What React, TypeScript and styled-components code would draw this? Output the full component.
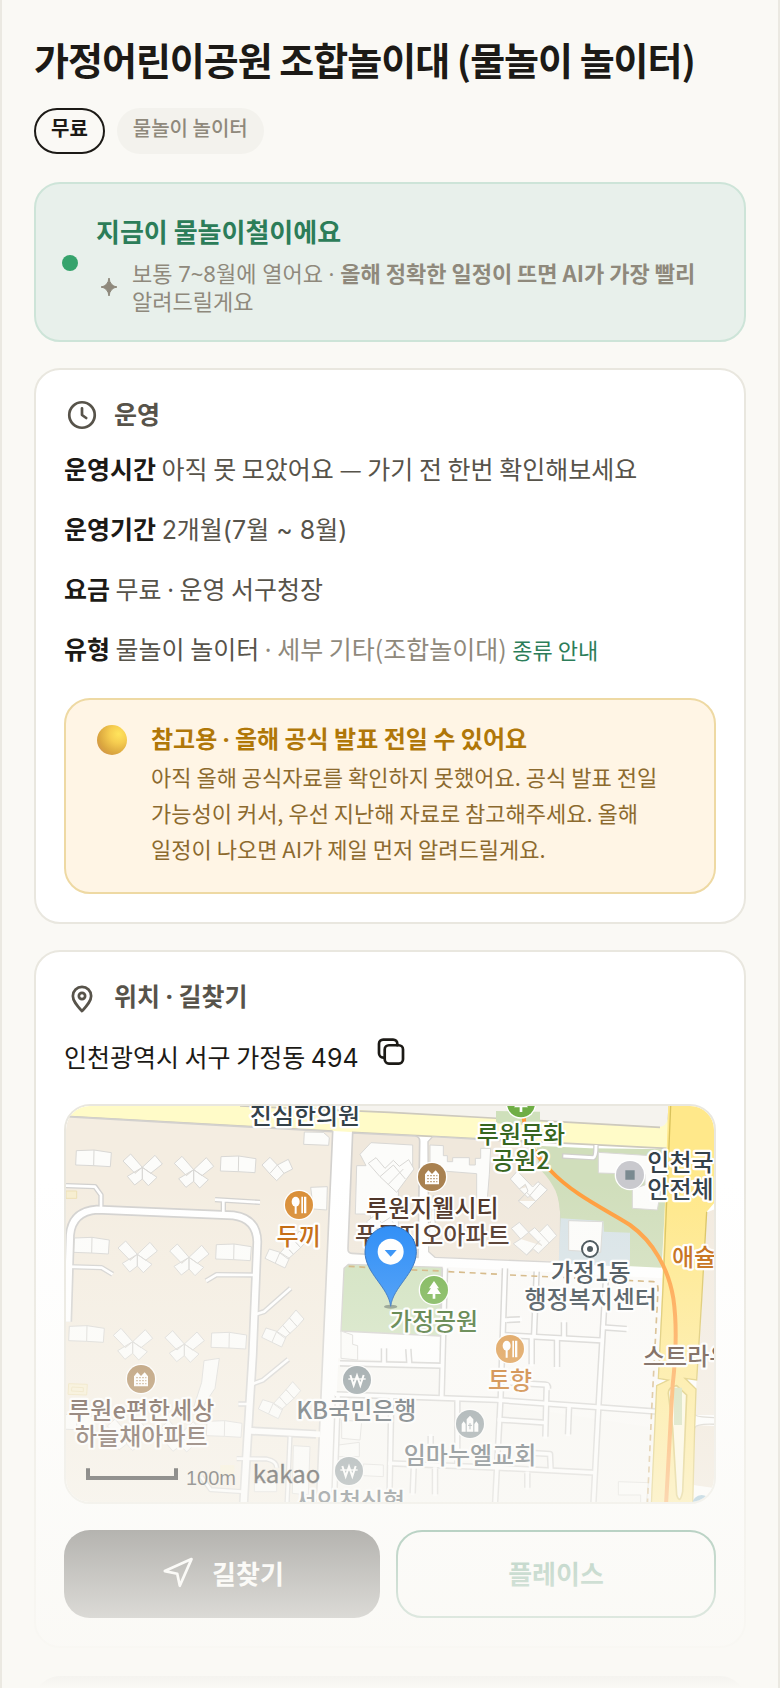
import React from 'react';
import styled, { createGlobalStyle } from 'styled-components';

const GlobalStyle = createGlobalStyle`
  *,
  *::before,
  *::after {
    box-sizing: border-box;
  }
  body {
    margin: 0;
    background: #faf9f5;
    color: #1c1a16;
    font-family: 'Noto Sans CJK KR', 'Noto Sans', sans-serif;
    word-break: keep-all;
  }
  h1, h2, p, ul {
    margin: 0;
    padding: 0;
  }
  button {
    font-family: inherit;
  }
`;

const Page = styled.main`
  position: relative;
  height: 100vh;
  overflow: hidden;
  padding: 32px 32px 0;
  border: solid #ebe9e2;
  border-width: 0 2px;
`;

const Fade = styled.div`
  position: absolute;
  left: 0;
  right: 0;
  bottom: 0;
  height: 30%;
  background: linear-gradient(rgba(250, 249, 245, 0), #faf9f5);
  pointer-events: none;
`;

const Title = styled.h1`
  font-size: 38px;
  line-height: 54px;
  font-weight: 700;
  letter-spacing: -1px;
`;

const Chips = styled.ul`
  display: flex;
  gap: 12px;
  margin-top: 22px;
  list-style: none;
`;

const Chip = styled.li<{ $outlined?: boolean }>`
  padding: ${({ $outlined }) => ($outlined ? '4px 15px 10px' : '6px 16px 12px')};
  border: ${({ $outlined }) => ($outlined ? '2px solid #1c1a16' : '0')};
  border-radius: 24px;
  background: ${({ $outlined }) => ($outlined ? 'transparent' : '#f3f2ed')};
  color: ${({ $outlined }) => ($outlined ? '#1c1a16' : '#8f897c')};
  font-size: 20px;
  line-height: 28px;
  font-weight: ${({ $outlined }) => ($outlined ? 700 : 500)};
`;

const Season = styled.section`
  display: flex;
  align-items: center;
  gap: 18px;
  margin-top: 28px;
  padding: 26px 26px 25px;
  border: 2px solid #cde4d8;
  border-radius: 26px;
  background: #e8f0eb;
`;

const Dot = styled.span`
  flex: none;
  width: 16px;
  height: 16px;
  border-radius: 50%;
  background: #36a36c;
`;

const SeasonTitle = styled.h2`
  margin-bottom: 7px;
  color: #2c7d59;
  font-size: 26px;
  line-height: 42px;
  font-weight: 700;
`;

const SeasonNote = styled.div`
  display: flex;
  align-items: center;
  gap: 10px;
  color: #8f897c;
  font-family: 'Noto Sans', 'Noto Sans CJK KR', sans-serif;
  font-size: 22px;
  line-height: 28px;
  svg {
    flex: none;
  }
  b {
    font-family: 'Noto Sans CJK KR', sans-serif;
    line-height: 20px;
  }
`;

const Card = styled.section`
  margin-top: 26px;
  padding: 27px 28px 28px;
  border: 2px solid #e9e7df;
  border-radius: 26px;
  background: #fff;
`;

const NextCard = styled(Card)`
  min-height: 200px;
  margin-top: 28px;
  border-color: #1c1a16;
  background: #1c1a16;
`;

const CardTitle = styled.h2`
  display: flex;
  gap: 14px;
  height: 36px;
  color: #57534a;
  font-size: 25px;
  line-height: 32px;
  font-weight: 700;
`;

const Facts = styled.div`
  display: grid;
  gap: 20px;
  margin-top: 15px;
`;

const Fact = styled.p`
  color: #57534a;
  font-size: 25px;
  line-height: 40px;
  b {
    color: #1c1a16;
  }
`;

const Muted = styled.span`
  color: #8f897c;
`;

// narrow middle dot, the CJK face draws it too wide
const Sep = styled.span`
  font-family: 'Noto Sans', sans-serif;
  line-height: 20px;
`;

const Digits = styled.span`
  font-family: Inter, 'Noto Sans CJK KR', sans-serif;
  line-height: 20px;
`;

const GuideLink = styled.a`
  color: #2c7d59;
  font-size: 22px;
  line-height: 28px;
  text-decoration: none;
`;

const Caution = styled.div`
  display: flex;
  gap: 24px;
  margin-top: 30px;
  padding: 21px 31px 26px;
  border: 2px solid #eed9a3;
  border-radius: 26px;
  background: #fff5e5;
`;

const CautionTitle = styled.p`
  margin-bottom: 3px;
  color: #b07708;
  font-size: 24px;
  line-height: 34px;
  font-weight: 700;
`;

const CautionText = styled.p`
  color: #8c6a2e;
  font-size: 22px;
  line-height: 36px;
`;

const Coin = styled.span`
  flex: none;
  width: 30px;
  height: 30px;
  margin-top: 4px;
  border-radius: 50%;
  background: radial-gradient(circle at 72% 30%, #ffe45c 0%, #f6cd50 30%, #dba73f 65%, #cf8f4c 88%, #d98468 100%);
`;

const Address = styled.div`
  display: flex;
  align-items: flex-end;
  gap: 12px;
  height: 44px;
  margin-top: 17px;
  font-size: 25px;
  line-height: 40px;
`;

const CopyButton = styled.button`
  display: flex;
  align-items: center;
  justify-content: center;
  align-self: flex-start;
  width: 40px;
  height: 40px;
  padding: 0;
  border: 0;
  background: none;
  color: inherit;
`;

const MapBox = styled.div`
  height: 400px;
  margin-top: 28px;
  border: 2px solid #e9e7df;
  border-radius: 26px;
  overflow: hidden;
  svg {
    display: block;
    width: 100%;
    height: 100%;
  }
`;

const Actions = styled.div`
  display: flex;
  gap: 16px;
  margin-top: 26px;
`;

const Action = styled.button<{ $outlined?: boolean }>`
  flex: 1 1 0;
  display: flex;
  align-items: center;
  justify-content: center;
  gap: 16px;
  height: 88px;
  padding: 0 16px 4px;
  border: ${({ $outlined }) => ($outlined ? '2px solid #2c7d59' : '0')};
  border-radius: 26px;
  background: ${({ $outlined }) => ($outlined ? 'transparent' : '#1c1a16')};
  color: ${({ $outlined }) => ($outlined ? '#2c7d59' : '#fff')};
  font-size: 26px;
  font-weight: 700;
`;

const Icon: React.FC<{ size: number; children: React.ReactNode }> = ({ size, children }) => (
  <svg
    width={size}
    height={size}
    viewBox="0 0 24 24"
    fill="none"
    stroke="currentColor"
    strokeWidth="1.8"
    strokeLinecap="round"
    strokeLinejoin="round"
    aria-hidden="true"
  >
    {children}
  </svg>
);

// map drawing, three units per pixel

const MapText = styled.text`
  font-family: 'Noto Sans CJK KR', sans-serif;
  font-size: 72px;
  font-weight: 500;
  text-anchor: middle;
  paint-order: stroke;
  stroke: #fff;
  stroke-width: 13px;
  stroke-linejoin: round;
`;

const MapTextStart = styled(MapText)`
  text-anchor: start;
`;

const ScaleText = styled.text`
  font-family: 'Liberation Sans', sans-serif;
  font-size: 60px;
  fill: #111;
`;

const LogoText = styled.text`
  font-family: 'Noto Sans CJK KR', sans-serif;
  font-size: 72px;
  font-weight: 400;
  fill: #000;
  stroke: #000;
  stroke-width: 1px;
`;

const lanes = [
  'M1155 520L1145 905',
  'M1335 520L1322 905L1305 1230',
  'M1430 530L1422 720',
  'M1637 560L1616 925L1600 1230',
  'M1330 720L1618 736',
  'M1415 730V808',
  'M1491 733V816',
  'M1512 682V728',
  'M1340 675L1380 673',
  'M1630 697L1700 702',
  'M840 805L1140 812',
  'M1045 762L1048 806',
  'M972 760V804',
  'M830 898L1310 915L1620 937L1795 950',
  'M1192 920V1110',
  'M1318 974L1455 983',
  'M1460 870L1456 1025',
  'M1350 863L1455 869Q1465 870 1464 880',
  'M1527 940L1524 1018',
  'M834 900L822 1230',
  'M994 910L988 1230',
  'M990 1105L1310 1118L1602 1133',
  'M1061 1120L1058 1195',
  'M1125 1122V1198',
  'M1402 1135V1178',
  'M1112 1023V1060',
  'M1400 1073L1470 1077L1472 1120',
];

const alleys = [
  'M18 272L105 275L123 300V340',
  'M490 355V318M465 314L600 322',
  'M22 515L125 518L158 538',
  'M585 540L470 539L438 558',
  'M580 660L612 650L692 580',
  'M580 866L608 856L685 793',
  'M530 1091L620 1092Q650 1098 650 1118',
  'M690 1025L681 1230',
  'M424 1145L452 1184L545 1190',
  'M535 927H570',
];

const crosses = [
  [247, 217], [401, 224], [232, 478], [387, 487], [218, 740], [373, 747], [200, 1012], [362, 1016],
];
const pairs = [
  [101, 190], [535, 208], [95, 452], [521, 472], [80, 717], [507, 737], [493, 1002], [50, 982],
];
const diagonals = [[650, 490], [640, 727], [630, 942]];

const Badge: React.FC<{ x: number; y: number; color: string; children: React.ReactNode }> = ({
  x,
  y,
  color,
  children,
}) => (
  <g transform={`translate(${x} ${y})`} fill="#fff">
    <circle r="46" />
    <circle r="42" fill={color} />
    {children}
  </g>
);

const Cutlery = () => (
  <>
    <ellipse cx="-10" cy="-10" rx="12" ry="15" />
    <path d="M-13 0h6v26h-6zM7 -25h5v50h-5zM15 -25h7v50h-7z" />
  </>
);

const Tree = () => <path d="M0 -27L15 -5H9L21 12H4V26H-4V12H-21L-9 -5H-15Z" />;

const Apartment: React.FC<{ color: string }> = ({ color }) => (
  <>
    <path d="M-21 -8L-11 -20L0 -9L11 -20L21 -8V22H-21Z" />
    <path d="M-14 -4H16M-14 5H16M-14 14H16" stroke={color} strokeWidth="4" strokeDasharray="4 5" />
  </>
);

const Won = () => (
  <g fill="none" stroke="#fff" strokeWidth="6">
    <path d="M-20 -15L-10 16L0 -13L10 16L20 -15" />
    <path d="M-26 -3H26" strokeWidth="4" />
  </g>
);

const Church = () => (
  <>
    <path d="M-10 23V-14L0 -25L10 -14V23ZM-25 23V0L-19 -8L-13 0V23ZM13 23V0L19 -8L25 0V23Z" />
    <path d="M0 -3V16M-6 4H6" stroke="#8a9599" strokeWidth="3" />
  </>
);

const ParkMap = () => (
  <svg viewBox="18 33 1944 1188" preserveAspectRatio="xMidYMid slice" role="img" aria-label="가정어린이공원 지도">
    <rect x="0" y="0" width="2000" height="1240" fill="#fff" />
    <path d="M835 790L1800 830L1775 1240H815Z" fill="#f9f8f5" />
    <path d="M1148 515L1810 550L1790 1000L1140 900Z" fill="#fbfaf8" />
    <path d="M500 0H1830L1822 118Q1820 130 1805 129L990 88L500 50Z" fill="#f5f3ee" stroke="#cfccc6" strokeWidth="5" />
    <path d="M0 20H560L990 52L1790 96Q1820 98 1823 70L1828 160L1070 122L820 108L0 64Z" fill="#fffbc8" />
    <path d="M540 33L990 52L1800 97M18 64L818 108M876 112L1070 122L1820 160" fill="none" stroke="#cdc9bd" strokeWidth="5" />
    <path d="M0 64L818 110L768 1240H0Z" fill="#f4ede1" stroke="#d3d1ce" strokeWidth="5" />
    <path d="M878 114L1066 123Q1080 126 1079 140L1074 487L876 475Q863 475 864 460Z" fill="#f0e8dc" stroke="#d3d1ce" strokeWidth="5" />
    <path d="M1118 125L1440 144L1442 200Q1500 270 1502 350L1500 502L1125 487L1106 470L1104 140Z" fill="#f0e8dc" stroke="#d3d1ce" strokeWidth="4" />
    <path d="M1430 152L1590 160L1824 163L1805 518L1498 503Q1512 320 1480 275Q1460 240 1435 220Z" fill="#d0debb" />
    <path d="M1502 370L1630 378L1632 410L1710 413V516L1496 505Z" fill="#d8e3e7" />
    <path d="M865 508L1146 517L1138 723L843 708L852 520Z" fill="#cfe1bd" stroke="#d3d1ce" strokeWidth="4" />
    <path d="M1308 48L1308 85L1440 92V50Z" fill="#cfe0bb" />
    <g fill="#fcfcfa" stroke="#d9d8d5" strokeWidth="3">
      <path d="M1615 172L1820 185L1792 345L1717 340V282L1755 270V238L1615 234Z" />
      <path d="M1526 377L1628 380L1622 472L1526 466Z" />
      <path d="M733 111L790 112L808 128L806 151L731 148ZM752 277L802 275L800 345L760 342Z" />
      <path d="M933 143L1058 150V220L1015 250V420H940L930 357H886L890 212H918L900 178Z" />
      <path d="M1110 150L1150 152V182H1162V200H1178V188H1228V210H1246V190H1262V160L1292 160L1288 238L1282 312L1250 310V236L1110 225Z" />
      <path d="M1120 300L1128 420L1108 415Z" />
      <path d="M1372 228L1351 252L1378 282L1396 268L1404 288L1375 318L1405 341L1462 284L1434 260L1418 276ZM1378 282L1404 308L1440 266M1375 318L1400 292L1426 318" />
      <path d="M1378 382L1354 400L1382 432L1360 446L1400 480L1420 462L1435 475L1490 422L1462 388L1438 412L1424 398L1406 412ZM1382 432L1406 412L1446 452M1400 480L1440 436M1438 412L1468 444" />
      <path d="M925 205L948 188L975 220L1000 196L1018 214L1046 194L1062 222L1010 292L960 245ZM960 245L1000 210L1036 252M985 268L1030 222" />
      <path d="M920 380L945 360L965 384L990 368L1010 400H930Z" />
      <path d="M432 797L478 790L465 880L425 940H400L425 862ZM843 708L878 720V748L893 752V795L843 790Z" />
      <path d="M1675 1160L1765 1163L1758 1240H1742V1200H1675Z" />
      <path d="M845 975L905 980L900 1035L845 1030ZM835 1050L898 1042V1085H835ZM700 1052L750 1055L745 1200L697 1195ZM910 1107L970 1110V1145L910 1142Z" />
      <path d="M583 1155L650 1158V1190H583Z" />
      {crosses.map(([x, y]) => (
        <path
          key={`${x}-${y}`}
          transform={`translate(${x} ${y})`}
          d="M-58 -19L-35 -40L0 0L-22 18ZM0 0L38 -36L60 -10L25 18ZM0 0L-45 27L-23 53L0 35ZM0 0V35L18 55L44 30Z"
        />
      ))}
      {pairs.map(([x, y]) => (
        <path
          key={`${x}-${y}`}
          transform={`translate(${x} ${y})`}
          d="M-52 -23L1 -25L53 -17L50 25L0 22L-54 20ZM1 -25L0 22"
        />
      ))}
      {diagonals.map(([x, y]) => (
        <path
          key={`${x}-${y}`}
          transform={`translate(${x} ${y})`}
          d="M-35 0L-22 -28L10 -18L38 0L25 29L-6 14ZM10 -18L-4 14M10 -16L28 -36L50 -12L34 2ZM28 -36L48 -58L72 -32L50 -12ZM48 -58L68 -82L92 -55L72 -32Z"
        />
      ))}
      <path d="M606 210L630 187L652 210L685 193L698 222L672 235L650 257L630 237ZM652 210L630 235M652 210L672 235" />
    </g>
    <g fill="#f7eed0" stroke="#eddfb4" strokeWidth="3">
      <path d="M18 288H50V310H18ZM26 866L82 868L80 900L24 898ZM36 876L70 878V890L34 888Z" />
      <path d="M481 1110H523V1143H481Z" stroke="none" />
    </g>
    <g fill="none" strokeLinejoin="round">
      <g stroke="#d2d1cf">
        {alleys.map((d) => <path key={d} d={d} strokeWidth="16" />)}
        <path d="M22 680L30 420Q36 350 110 344L520 361Q590 370 592 440L578 780L564 1007L550 1240" strokeWidth="29" />
        <path d="M562 1007L768 1018" strokeWidth="27" />
      </g>
      <g stroke="#fff">
        {alleys.map((d) => <path key={d} d={d} strokeWidth="8" />)}
        <path d="M22 680L30 420Q36 350 110 344L520 361Q590 370 592 440L578 780L564 1007L550 1240" strokeWidth="19" />
        <path d="M562 1007L780 1018" strokeWidth="17" />
      </g>
      <g stroke="#d2d1cf" strokeWidth="20">
        {lanes.map((d) => <path key={d} d={d} />)}
      </g>
      <g stroke="#fff" strokeWidth="11" strokeLinecap="square">
        {lanes.map((d) => <path key={d} d={d} />)}
      </g>
      <path d="M1506 183L1600 188Q1608 187 1608 150" stroke="#d0cfcb" strokeWidth="16" />
      <path d="M1510 183L1600 188Q1608 187 1608 150" stroke="#fff" strokeWidth="9" />
      <path d="M866 514L918 517M990 522L1140 528M1165 530L1325 538M1350 540L1780 560Q1795 562 1794 585L1775 945L1762 1230" stroke="#cfae75" strokeWidth="5" strokeDasharray="18 14" />
    </g>
    <path d="M1938 353L1970 340V960L1905 960L1910 850L1925 630Z" fill="#f2eadf" />
    <path d="M1905 990L1970 993V1180L1900 1170Z" fill="#efe4d5" />
    <path d="M1905 958Q1905 967 1970 968V988Q1905 985 1904 1000" fill="#fff" stroke="#cfcbc4" strokeWidth="4" />
    <path
      d="M1825 20H1975V310L1940 350L1925 615L1910 855L1875 850L1908 882L1905 990L1898 1240H1772L1785 985L1790 870L1825 855L1795 850L1805 615Z"
      fill="#ffe88a"
    />
    <path
      d="M1832 33L1810 560L1795 850L1825 855L1790 872L1785 985L1774 1230M1940 350L1925 615L1910 855L1875 850L1908 882L1904 1000L1898 1230"
      fill="none"
      stroke="#d9c25c"
      strokeWidth="4"
    />
    <path d="M1825 895Q1825 875 1850 872L1880 900L1868 1190Q1860 1230 1850 1200L1838 1000Z" fill="#fff9dd" stroke="#d9c25c" strokeWidth="5" />
    <path d="M1842 878H1866V990H1842Z" fill="#cddcae" />
    <path d="M1390 60C1395 110 1410 165 1470 225C1540 300 1640 345 1710 390C1780 440 1825 520 1840 610C1850 680 1848 780 1838 870L1818 1230" fill="none" stroke="#ff9d3b" strokeWidth="12" />
    <circle cx="1925" cy="1228" r="28" fill="#83b4cf" />

    <Badge x={717} y={330} color="#d98d35"><Cutlery /></Badge>
    <Badge x={1116} y={246} color="#a98150"><Apartment color="#a98150" /></Badge>
    <Badge x={1383} y={25} color="#6fae45"><Tree /></Badge>
    <Badge x={1122} y={585} color="#71b048"><Tree /></Badge>
    <Badge x={1350} y={762} color="#d98d35"><Cutlery /></Badge>
    <Badge x={891} y={855} color="#7d8b90"><Won /></Badge>
    <Badge x={867} y={1128} color="#7d8b90"><Won /></Badge>
    <Badge x={1230} y={987} color="#7d8b90"><Church /></Badge>
    <Badge x={243} y={852} color="#a98150"><Apartment color="#a98150" /></Badge>
    <Badge x={1710} y={240} color="#c9c9ce"><path d="M-14 -14H14V14H-14Z" fill="#7a8a90" /></Badge>
    <circle cx="1590" cy="462" r="24" fill="#fff" stroke="#39464c" strokeWidth="6" />
    <circle cx="1590" cy="462" r="9" fill="#39464c" />

    <MapText x="735" y="86" fill="#344149">진심한의원</MapText>
    <MapText x="716" y="449" fill="#c06000">두끼</MapText>
    <MapText x="1383" y="144" fill="#37661f">루원문화</MapText>
    <MapText x="1383" y="222" fill="#37661f">공원2</MapText>
    <MapText x="1117" y="366" fill="#4a2f22">루원지웰시티</MapText>
    <MapText x="1117" y="447" fill="#4a2f22">푸르지오아파트</MapText>
    <MapTextStart x="1762" y="228" fill="#344149">인천국</MapTextStart>
    <MapTextStart x="1762" y="309" fill="#344149">안전체</MapTextStart>
    <MapTextStart x="1836" y="512" fill="#c06000">애슐</MapTextStart>
    <MapText x="1592" y="559" fill="#344149">가정1동</MapText>
    <MapText x="1592" y="639" fill="#344149">행정복지센터</MapText>
    <MapText x="1122" y="706" fill="#37661f">가정공원</MapText>
    <MapTextStart x="1749" y="809" fill="#4a2f22">스트라우</MapTextStart>
    <MapText x="1350" y="881" fill="#c06000">토향</MapText>
    <MapText x="889" y="971" fill="#344149">KB국민은행</MapText>
    <MapText x="1230" y="1106" fill="#344149">임마누엘교회</MapText>
    <MapText x="244" y="971" fill="#4a2f22">루원e편한세상</MapText>
    <MapText x="244" y="1049" fill="#4a2f22">하늘채아파트</MapText>
    <MapText x="870" y="1245" fill="#344149">서인천신협</MapText>

    <path d="M84 1120V1149H348V1120" fill="none" stroke="#000" strokeWidth="12" />
    <ScaleText x="378" y="1171">100m</ScaleText>
    <LogoText x="578" y="1165">kakao</LogoText>

    <ellipse cx="992" cy="635" rx="20" ry="6" fill="#4a5a50" opacity=".6" />
    <path
      d="M992 634C985 575 915 535 915 470A77 77 0 0 1 1069 470C1069 535 999 575 992 634Z"
      fill="#1f86f7"
      stroke="#1a62b8"
      strokeWidth="3"
    />
    <circle cx="992" cy="470" r="39" fill="#fff" />
    <path d="M974 465H1010L992 485Z" fill="#1f86f7" />
  </svg>
);

const App: React.FC = () => (
  <>
    <GlobalStyle />
    <Page>
      <Title>가정어린이공원 조합놀이대 (물놀이 놀이터)</Title>
      <Chips>
        <Chip $outlined>무료</Chip>
        <Chip>물놀이 놀이터</Chip>
      </Chips>

      <Season>
        <Dot />
        <div>
          <SeasonTitle>지금이 물놀이철이에요</SeasonTitle>
          <SeasonNote>
            <svg width="26" height="22" viewBox="0 0 26 22" aria-hidden="true">
              <path d="M13 2Q14 10 21 11Q14 12 13 20Q12 12 5 11Q12 10 13 2Z" fill="currentColor" stroke="currentColor" />
            </svg>
            <p>
              보통 7~8월에 열어요 · <b>올해 정확한 일정이 뜨면 AI가 가장 빨리</b> 알려드릴게요
            </p>
          </SeasonNote>
        </div>
      </Season>

      <Card>
        <CardTitle>
          <Icon size={36}>
            <circle cx="12" cy="12" r="8.5" />
            <path d="M12 7.5V12l2.8 2" />
          </Icon>
          운영
        </CardTitle>
        <Facts>
          <Fact><b>운영시간</b> 아직 못 모았어요 — 가기 전 한번 확인해보세요</Fact>
          <Fact><b>운영기간</b> <Digits>2개월(7월 ~ 8월)</Digits></Fact>
          <Fact><b>요금</b> 무료 <Sep>·</Sep> 운영 서구청장</Fact>
          <Fact>
            <b>유형</b> 물놀이 놀이터 <Muted><Sep>·</Sep> 세부 기타(조합놀이대)</Muted>{' '}
            <GuideLink href="#types">종류 안내</GuideLink>
          </Fact>
        </Facts>
        <Caution>
          <Coin />
          <div>
            <CautionTitle>참고용 <Sep>·</Sep> 올해 공식 발표 전일 수 있어요</CautionTitle>
            <CautionText>
              아직 올해 공식자료를 확인하지 못했어요. 공식 발표 전일 가능성이 커서, 우선 지난해 자료로
              참고해주세요. 올해 일정이 나오면 AI가 제일 먼저 알려드릴게요.
            </CautionText>
          </div>
        </Caution>
      </Card>

      <Card>
        <CardTitle>
          <Icon size={36}>
            <path d="M12 21.4c3.8-4.2 6.1-7 6.1-10.1a6.1 6.1 0 1 0-12.2 0c0 3.1 2.3 5.9 6.1 10.1z" />
            <circle cx="12" cy="11.3" r="2.1" />
          </Icon>
          <span>위치 <Sep>·</Sep> 길찾기</span>
        </CardTitle>
        <Address>
          <span>인천광역시 서구 가정동 <Digits>494</Digits></span>
          <CopyButton type="button" aria-label="주소 복사">
            <Icon size={36}>
              <rect x="7.8" y="7.5" width="12.2" height="12.2" rx="2.8" />
              <path d="M7.8 15.7H6.8A2.8 2.8 0 0 1 4 12.9V6.5a2.8 2.8 0 0 1 2.8-2.8h6.6a2.8 2.8 0 0 1 2.8 2.8v1" />
            </Icon>
          </CopyButton>
        </Address>
        <MapBox>
          <ParkMap />
        </MapBox>
        <Actions>
          <Action type="button">
            <Icon size={36}>
              <path d="M21 3.4L13.2 21.2L11.5 13.2L3.2 11.4Z" />
            </Icon>
            길찾기
          </Action>
          <Action type="button" $outlined>플레이스</Action>
        </Actions>
      </Card>

      <NextCard />
      <Fade />
    </Page>
  </>
);

export default App;
